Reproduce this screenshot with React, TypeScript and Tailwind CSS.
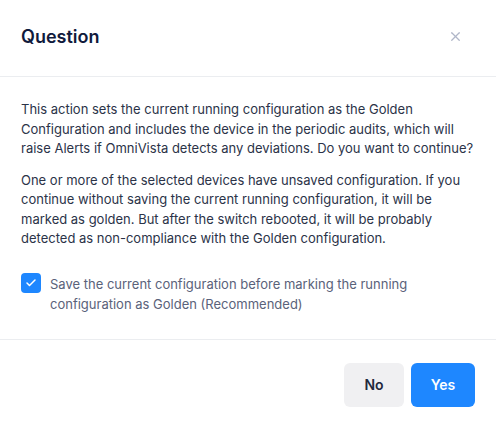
import { X, Check } from "lucide-react";

export default function App() {
  return (
    <div className="w-[496px] h-[428px] bg-white font-['Inter',sans-serif] flex flex-col">
      <div className="h-[77px] px-[21px] pb-[3px] flex items-center justify-between border-b border-[#ebedf0]">
        <h2 className="text-[18px] font-semibold text-[#101a3c]">Question</h2>
        <X className="w-[15px] h-[15px] text-[#b0b6c8] mr-[12px]" strokeWidth={2} />
      </div>
      <div className="px-[21px] pt-[23px] pb-[25px] text-[13px] leading-[19.5px] text-[#2b3348] border-b border-[#ebedf0]">
        <p>
          This action sets the current running configuration as the Golden Configuration and includes the device in the periodic audits, which will raise Alerts if OmniVista detects any deviations. Do you want to continue?
        </p>
        <p className="mt-3">
          One or more of the selected devices have unsaved configuration. If you continue without saving the current running configuration, it will be marked as golden. But after the switch rebooted, it will be probably detected as non-compliance with the Golden configuration.
        </p>
        <label className="mt-[25px] flex items-start gap-[9px] text-[#5a627a] leading-5">
          <span className="mt-[-1px] w-5 h-5 shrink-0 rounded-[4px] bg-[#1e87ff] flex items-center justify-center">
            <Check className="w-3 h-3 text-white" strokeWidth={3} />
          </span>
          <span className="pr-[40px]">
            Save the current configuration before marking the running configuration as Golden (Recommended)
          </span>
        </label>
      </div>
      <div className="px-[21px] pt-[23px] flex justify-end gap-[7px]">
        <button className="w-[60px] h-[44px] rounded-[6px] bg-[#f0f0f2] text-[14px] font-semibold text-[#23293d]">No</button>
        <button className="w-[64px] h-[44px] rounded-[6px] bg-[#1e87ff] text-[14px] font-semibold text-white">Yes</button>
      </div>
    </div>
  );
}
